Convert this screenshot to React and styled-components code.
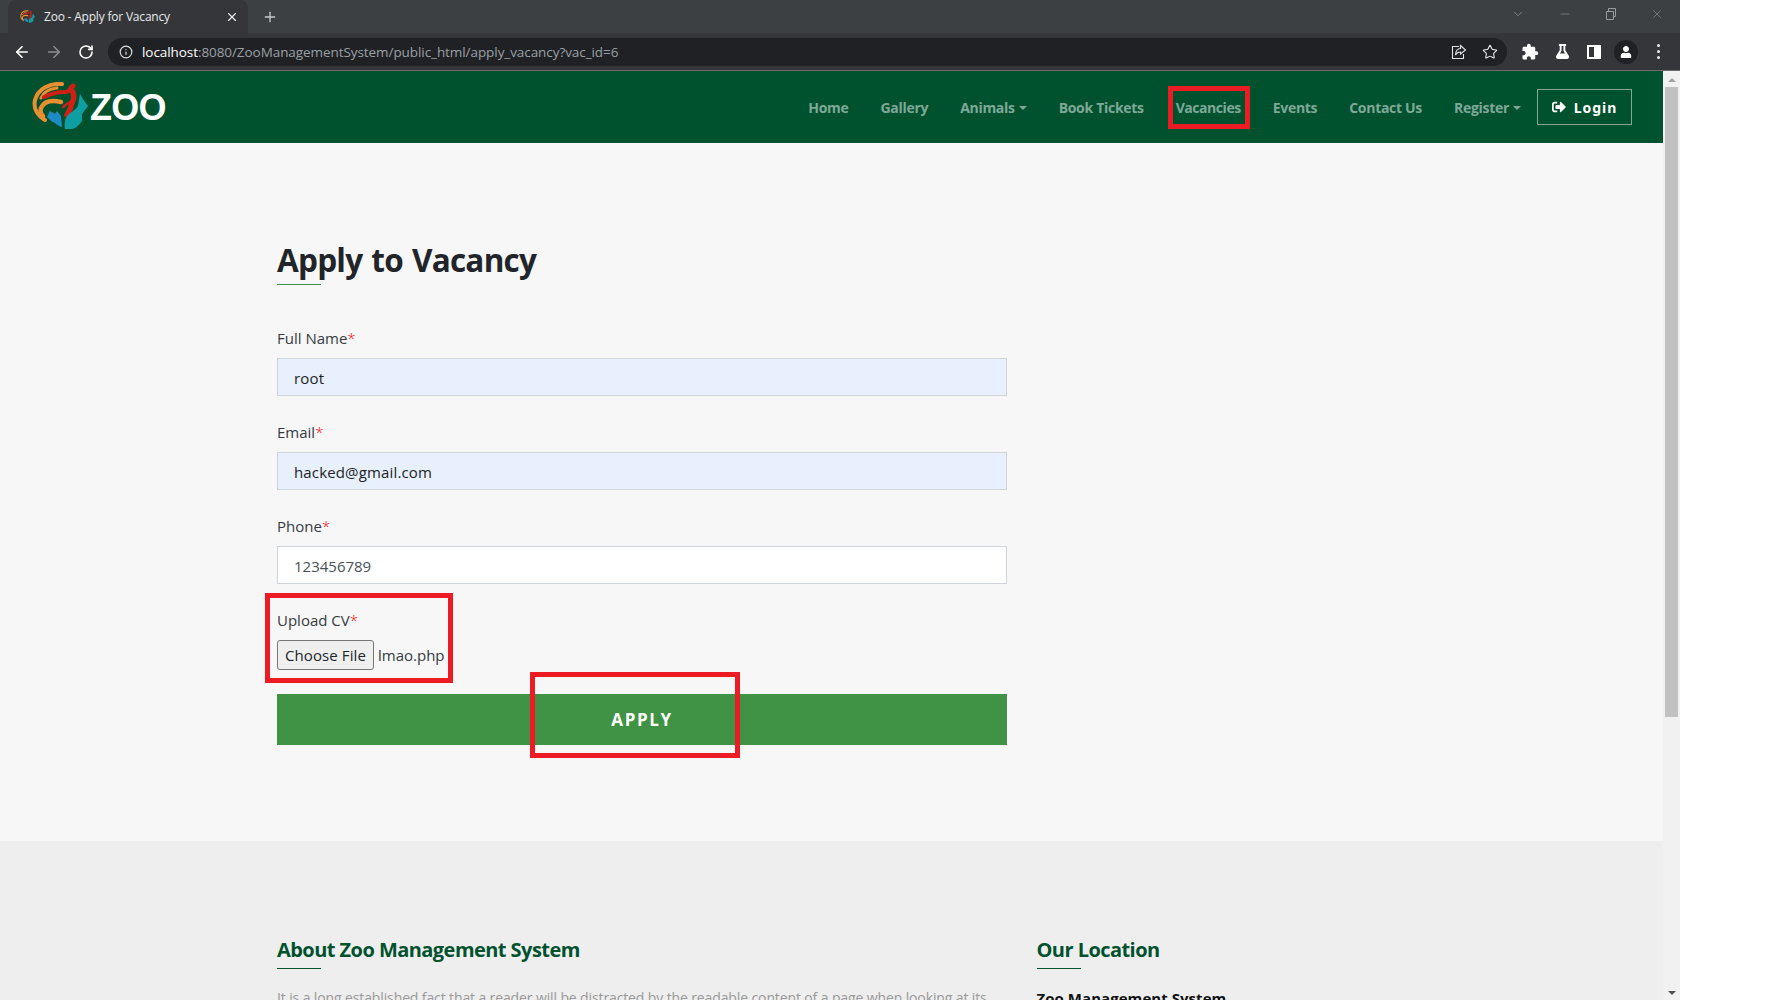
import React from 'react';
import styled, { createGlobalStyle } from 'styled-components';
import { ArrowLeft, ArrowRight, RotateCw, Info, Star, X, Plus, ChevronDown, Minus } from 'lucide-react';
import { FaSignOutAlt, FaFlask, FaUser } from 'react-icons/fa';
import { MdExtension } from 'react-icons/md';

const UI_FONT = `"Open Sans", "Noto Sans", "Liberation Sans", sans-serif`;

const GlobalStyle = createGlobalStyle`
  * { box-sizing: border-box; }
  html, body { margin: 0; padding: 0; background: #fff; }
  body { font-family: ${UI_FONT}; overflow: hidden; }
`;

const Screen = styled.div`
  width: 1779px;
  height: 1000px;
  overflow: hidden;
  background: #fff;
`;

const Browser = styled.div`
  width: 1680px;
  height: 1000px;
  display: flex;
  flex-direction: column;
`;

const TabStrip = styled.div`
  height: 33px;
  flex: none;
  background: #3d4043;
  display: flex;
  align-items: flex-end;
  padding-left: 8px;
  color: #dee1e6;
`;

const Tab = styled.div`
  width: 240px;
  height: 33px;
  background: #35363a;
  border-radius: 8px 8px 0 0;
  display: flex;
  align-items: center;
  padding: 0 9px 0 12px;
  font-size: 12px;
  letter-spacing: -0.2px;
  color: #e8eaed;
`;

const Favicon = styled.svg`
  width: 16px;
  height: 16px;
  flex: none;
  margin-right: 8px;
`;

const TabTitle = styled.span`
  flex: 1;
  white-space: nowrap;
`;

const NewTab = styled.div`
  margin-left: 14px;
  height: 33px;
  display: flex;
  align-items: center;
  color: #c4c7cc;
`;

const WindowControls = styled.div`
  margin-left: auto;
  display: flex;
  align-items: center;
  height: 28px;
  color: #9a9da0;
  padding-right: 16px;
  gap: 33px;
  align-self: flex-start;
`;

const Toolbar = styled.div`
  height: 38px;
  flex: none;
  background: #35363a;
  border-bottom: 1px solid #6a6c70;
  display: flex;
  align-items: center;
  padding-left: 13px;
  color: #dfe1e5;
`;

const NavIcon = styled.div`
  width: 18px;
  display: flex;
  justify-content: center;
  margin-right: 14px;
  color: ${({ $dim }) => ($dim ? '#8a8d91' : '#fff')};
`;

const Omnibox = styled.div`
  width: 1399px;
  height: 28px;
  border-radius: 14px;
  background: #202124;
  display: flex;
  align-items: center;
  padding: 0 9px 0 11px;
  margin-left: -1px;
`;

const Url = styled.div`
  margin-left: 9px;
  flex: 1;
  font-size: 13.5px;
  letter-spacing: -0.07px;
  color: #9aa0a6;
  white-space: nowrap;

  b {
    font-weight: 400;
    color: #fff;
  }
`;

const BookmarkStar = styled(Star)`
  margin-left: 15px;
`;

const ToolIcons = styled.div`
  margin-left: 7px;
  display: grid;
  grid-template-columns: repeat(5, 32px);
  justify-items: center;
  align-items: center;
  color: #fff;
`;

const Avatar = styled.div`
  width: 24px;
  height: 24px;
  border-radius: 50%;
  background: #202124;
  display: flex;
  align-items: center;
  justify-content: center;
`;

const Dots = styled.div`
  display: flex;
  flex-direction: column;
  gap: 3px;
  width: 3px;

  i {
    width: 3px;
    height: 3px;
    border-radius: 50%;
    background: #e8eaed;
  }
`;

const Viewport = styled.div`
  flex: 1;
  min-height: 0;
  display: flex;
`;

const Page = styled.div`
  width: 1663px;
  flex: none;
  display: flex;
  flex-direction: column;
`;

const Scrollbar = styled.div`
  width: 17px;
  flex: none;
  background: #f1f1f1;
  display: flex;
  flex-direction: column;
  align-items: center;
`;

const ScrollArrow = styled.div`
  width: 0;
  height: 0;
  flex: none;
  border-left: 4px solid transparent;
  border-right: 4px solid transparent;
  margin: 7px 0 5px;
  ${({ $down }) =>
    $down ? 'border-top: 4px solid #505050;' : 'border-bottom: 4px solid #a3a3a3;'}
`;

const ScrollThumb = styled.div`
  width: 13px;
  height: 630px;
  flex: none;
  background: #c1c1c1;
  margin-bottom: auto;
`;

const Navbar = styled.nav`
  height: 72px;
  flex: none;
  background: #00522f;
  display: flex;
  align-items: center;
  padding: 0 31px 0 32px;
`;

const Logo = styled.div`
  display: flex;
  align-items: center;
  height: 50px;
`;

const LogoMark = styled.svg`
  width: 60px;
  height: 50px;
  flex: none;
`;

const LogoWord = styled.span`
  font-family: "Liberation Sans", sans-serif;
  font-weight: 700;
  font-size: 36px;
  letter-spacing: -0.8px;
  color: #fff;
  margin: 1px 0 0 -2px;
`;

const NavLinks = styled.div`
  margin-left: auto;
  display: flex;
  align-items: center;
  gap: 32px;
`;

const NavLink = styled.a`
  position: relative;
  top: 1px;
  font-size: 14px;
  font-weight: 700;
  letter-spacing: ${({ $tight }) => ($tight ? '-0.45px' : '-0.3px')};
  line-height: 20px;
  color: #7fa897;
  white-space: nowrap;
`;

const Caret = styled.span`
  display: inline-block;
  margin-left: 4px;
  vertical-align: 3px;
  border-top: 4px solid #7fa897;
  border-left: 4px solid transparent;
  border-right: 4px solid transparent;
`;

const LoginButton = styled.button`
  width: 95px;
  height: 36px;
  margin-left: -16px;
  background: transparent;
  border: 1px solid #7fa897;
  color: #fff;
  font-family: "Noto Sans", sans-serif;
  font-weight: 700;
  font-size: 14px;
  letter-spacing: 1px;
  display: flex;
  align-items: center;
  justify-content: center;
  gap: 8px;
  padding: 0;
`;

const RedBox = styled.span`
  position: absolute;
  border: 5px solid #ed1c24;
  pointer-events: none;
  left: ${({ $left }) => $left}px;
  top: ${({ $top }) => $top}px;
  width: ${({ $w }) => $w}px;
  height: ${({ $h }) => $h}px;
`;

const Main = styled.main`
  height: 698px;
  flex: none;
  background: #f7f7f7;
  padding: 98px 0 0 277px;
`;

const FormColumn = styled.div`
  width: 730px;
`;

const Title = styled.h2`
  margin: 0 0 40px;
  font-size: 31.5px;
  font-weight: 700;
  line-height: 38px;
  letter-spacing: -0.75px;
  word-spacing: 1.5px;
  color: #212529;
  padding-bottom: 6px;
  border-bottom: 1px solid transparent;
  position: relative;
  white-space: nowrap;

  &::after {
    content: '';
    position: absolute;
    left: 0;
    bottom: 0;
    width: 44px;
    height: 1px;
    background: #409244;
  }
`;

const Field = styled.div`
  position: relative;
  margin-bottom: 24px;
`;

const Label = styled.label`
  display: block;
  font-size: 15px;
  line-height: 24px;
  margin-bottom: 8px;
  color: #343a40;

  em {
    font-style: normal;
    font-weight: 300;
    color: #f00;
  }
`;

const Input = styled.input`
  display: block;
  width: 100%;
  height: 38px;
  padding: 2px 16px 0;
  font-family: ${UI_FONT};
  font-size: 15px;
  letter-spacing: ${({ $filled }) => ($filled ? '0.15px' : '0')};
  color: ${({ $filled }) => ($filled ? '#1b1f23' : '#495057')};
  background: ${({ $filled }) => ($filled ? '#e8f0fe' : '#fff')};
  border: 1px solid #ced4da;
  outline: none;
`;

const FileRow = styled.div`
  display: flex;
  align-items: center;
  height: 30px;
`;

const FileButton = styled.button`
  width: 97px;
  height: 30px;
  padding: 0;
  font-family: ${UI_FONT};
  font-size: 15px;
  letter-spacing: 0.1px;
  color: #212529;
  background: #efefef;
  border: 1px solid #767676;
  border-radius: 3px;
`;

const FileName = styled.span`
  margin-left: 4px;
  font-size: 15px;
  color: #343a40;
`;

const ApplyButton = styled.div`
  position: relative;
  height: 51px;
  background: #409244;
  color: #fff;
  font-weight: 700;
  font-size: 17px;
  letter-spacing: 1.6px;
  padding-bottom: 1px;
  display: flex;
  align-items: center;
  justify-content: center;
`;

const Footer = styled.footer`
  flex: 1;
  min-height: 0;
  overflow: hidden;
  background: #eee;
  padding: 97px 0 0 277px;
  display: grid;
  grid-template-columns: 730px 400px;
  column-gap: 29.5px;
  align-content: start;
`;

const FooterTitle = styled.h4`
  margin: 0 0 17px;
  font-size: 20px;
  font-weight: 700;
  line-height: 24px;
  letter-spacing: -0.55px;
  color: #00522f;
  padding-bottom: 7px;
  position: relative;
  white-space: nowrap;

  &::after {
    content: '';
    position: absolute;
    left: 0;
    bottom: 0;
    width: 44px;
    height: 1px;
    background: #00522f;
  }
`;

const FooterText = styled.p`
  margin: 0;
  font-size: 14px;
  line-height: 24px;
  letter-spacing: -0.12px;
  color: #999;
`;

const FooterStrong = styled.div`
  font-size: 15px;
  font-weight: 700;
  line-height: 24px;
  letter-spacing: 0.05px;
  color: #111;
`;

const ShareIcon = () => (
  <svg width="16" height="16" viewBox="0 0 16 16" fill="none" stroke="#dfe1e5" strokeWidth="1.1">
    <path d="M8 2.5H1.5v12h11V10" />
    <path d="M9.5 1.5l5 4.5-5 4V8C7 8 5.5 9 4.5 11c0-4 2-6.5 5-6.5z" />
  </svg>
);

const SidePanelIcon = () => (
  <svg width="14" height="14" viewBox="0 0 14 14">
    <path fill="#fff" d="M0 0h14v14H0z" />
    <path fill="#35363a" d="M2 2h5v10H2z" />
  </svg>
);

const LogoShapes = () => (
  <>
    <g fill="none" stroke="#e98f32" strokeLinecap="round">
      <path strokeWidth="4" d="M30 2C17 1 6 7 3 18c-2 9 3 16 10 20" />
      <path strokeWidth="3" d="M25 6C17 7 11 11 9 16" />
      <path strokeWidth="4.5" d="M29 20c-9-2-17-1-20 6-1 3 0 6 2 8" />
    </g>
    <g fill="none" stroke="#d01f14" strokeLinecap="round" strokeLinejoin="round">
      <path strokeWidth="4" d="M12 15c6-3 13-5 21-5 3 0 5-2 6-5" />
      <path strokeWidth="5.5" d="M40 9c3 4 2 8 0 12-1 5-3 9-5 12" />
      <path strokeWidth="2.5" d="M38 20c-2 1-5 3-7 5" />
    </g>
    <circle cx="41" cy="4" r="2.6" fill="#d01f14" />
    <path fill="#0f9fa3" d="M33 47c-1-5 0-10 2-13 3-4 8-5 11-10 1-4 1-8 2-12 2 4 5 8 8 12-2 3-4 5-6 8l0 7c-3 4-6 7-10 8z" />
    <path fill="#1d8cc4" d="M15 35l3-6 5 3 2-3 4 5 1 11c-3-1-5-2-7-4-3-1-5-3-8-6z" />
  </>
);

const App = () => (
  <Screen>
    <GlobalStyle />
    <Browser>
      <TabStrip>
        <Tab>
          <Favicon viewBox="0 0 60 50">
            <LogoShapes />
          </Favicon>
          <TabTitle>Zoo - Apply for Vacancy</TabTitle>
          <X size={14} strokeWidth={2} />
        </Tab>
        <NewTab>
          <Plus size={16} strokeWidth={2} />
        </NewTab>
        <WindowControls>
          <ChevronDown size={14} strokeWidth={1.2} />
          <Minus size={14} strokeWidth={1} />
          <svg width="12" height="12" viewBox="0 0 12 12" fill="none" stroke="#9a9da0">
            <path d="M1.5 3.5h7v8h-7z M3.5 3.5v-3h7v8h-2" />
          </svg>
          <X size={14} strokeWidth={1} />
        </WindowControls>
      </TabStrip>
      <Toolbar>
        <NavIcon>
          <ArrowLeft size={18} strokeWidth={2.2} />
        </NavIcon>
        <NavIcon $dim>
          <ArrowRight size={18} strokeWidth={2.2} />
        </NavIcon>
        <NavIcon>
          <RotateCw size={16} strokeWidth={2.4} />
        </NavIcon>
        <Omnibox>
          <Info size={14} color="#dfe1e5" />
          <Url>
            <b>localhost</b>:8080/ZooManagementSystem/public_html/apply_vacancy?vac_id=6
          </Url>
          <ShareIcon />
          <BookmarkStar size={16} strokeWidth={1.6} color="#e8eaed" />
        </Omnibox>
        <ToolIcons>
          <MdExtension size={18} />
          <FaFlask size={15} />
          <SidePanelIcon />
          <Avatar>
            <FaUser size={12} />
          </Avatar>
          <Dots>
            <i />
            <i />
            <i />
          </Dots>
        </ToolIcons>
      </Toolbar>
      <Viewport>
        <Page>
          <Navbar>
            <Logo>
              <LogoMark viewBox="0 0 60 50">
                <LogoShapes />
              </LogoMark>
              <LogoWord>ZOO</LogoWord>
            </Logo>
            <NavLinks>
              <NavLink>Home</NavLink>
              <NavLink>Gallery</NavLink>
              <NavLink>
                Animals
                <Caret />
              </NavLink>
              <NavLink>Book Tickets</NavLink>
              <NavLink $tight>
                Vacancies
                <RedBox $left={-8} $top={-12} $w={82} $h={43} />
              </NavLink>
              <NavLink>Events</NavLink>
              <NavLink>Contact Us</NavLink>
              <NavLink>
                Register
                <Caret />
              </NavLink>
              <LoginButton>
                <FaSignOutAlt size={14} />
                Login
              </LoginButton>
            </NavLinks>
          </Navbar>
          <Main>
            <FormColumn>
              <Title>Apply to Vacancy</Title>
              <Field>
                <Label>
                  Full Name<em>*</em>
                </Label>
                <Input $filled readOnly value="root" />
              </Field>
              <Field>
                <Label>
                  Email<em>*</em>
                </Label>
                <Input $filled readOnly value="hacked@gmail.com" />
              </Field>
              <Field>
                <Label>
                  Phone<em>*</em>
                </Label>
                <Input readOnly value="123456789" />
              </Field>
              <Field>
                <Label>
                  Upload CV<em>*</em>
                </Label>
                <FileRow>
                  <FileButton>Choose File</FileButton>
                  <FileName>lmao.php</FileName>
                </FileRow>
                <RedBox $left={-12} $top={-15} $w={188} $h={90} />
              </Field>
              <ApplyButton>
                APPLY
                <RedBox $left={253} $top={-22} $w={210} $h={86} />
              </ApplyButton>
            </FormColumn>
          </Main>
          <Footer>
            <div>
              <FooterTitle>About Zoo Management System</FooterTitle>
              <FooterText>
                It is a long established fact that a reader will be distracted by the readable
                content of a page when looking at its layout.
              </FooterText>
            </div>
            <div>
              <FooterTitle>Our Location</FooterTitle>
              <FooterStrong>Zoo Management System</FooterStrong>
            </div>
          </Footer>
        </Page>
        <Scrollbar>
          <ScrollArrow />
          <ScrollThumb />
          <ScrollArrow $down />
        </Scrollbar>
      </Viewport>
    </Browser>
  </Screen>
);

export default App;
